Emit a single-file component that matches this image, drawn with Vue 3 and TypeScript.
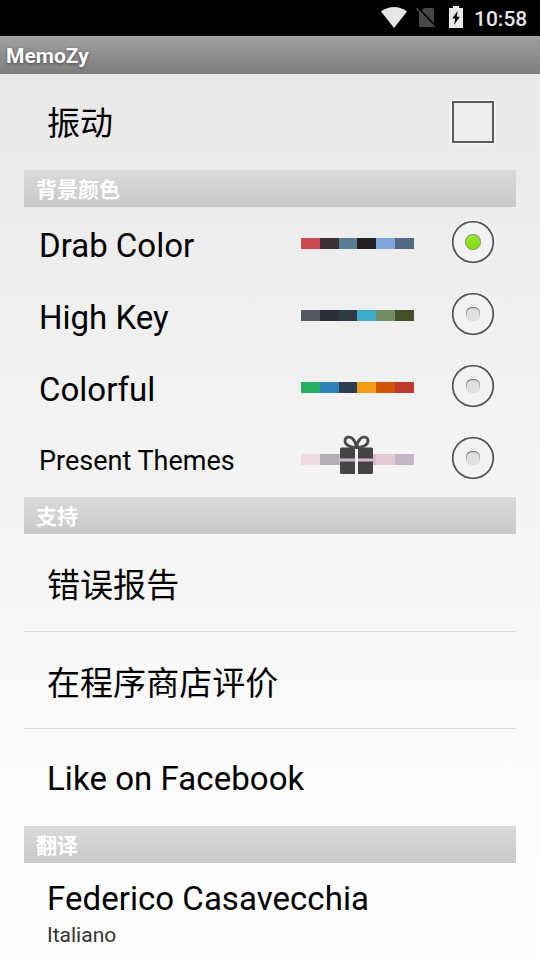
<script setup lang="ts">
import { ref } from 'vue'

interface Theme {
  name: string
  colors: string[]
  locked?: boolean
}

const themes: Theme[] = [
  { name: 'Drab Color', colors: ['#cc484f', '#3f3435', '#577c93', '#212223', '#7ea5da', '#536885'] },
  { name: 'High Key', colors: ['#555961', '#2a2e38', '#303c45', '#3cabc7', '#718d63', '#435126'] },
  { name: 'Colorful', colors: ['#29b060', '#2c81ba', '#2d3e50', '#f49c14', '#d25400', '#c1392c'] },
  { name: 'Present Themes', colors: ['#f0dce0', '#b5afb6', '#c8b8c6', '#d9b9cb', '#e3c8d5', '#c4b5c5'], locked: true },
]
const selected = ref('Drab Color')
const vibrate = ref(false)
const support: string[] = ['错误报告', '在程序商店评价', 'Like on Facebook']
</script>

<template>
  <div class="screen">
    <header class="status">
      <svg class="wifi" width="26" height="21" viewBox="0 0 26 21">
        <path d="M0 4.6C7.6-1.5 18.4-1.5 26 4.6L13 21Z" fill="#e6e6e6" />
      </svg>
      <svg class="sim" width="20" height="21" viewBox="0 0 20 21">
        <path d="M8 1h8.5a1.5 1.5 0 0 1 1.5 1.5V20H4.500a1.500 1.500 0 0 1-1.500-1.500V5.500Z" fill="#474747" />
        <path d="M1.200.6 19.500 20" stroke="#000" stroke-width="3" />
        <path d="M.6 1.600 18.500 20.300" stroke="#555" stroke-width="1.500" />
      </svg>
      <svg class="battery" width="14" height="22" viewBox="0 0 14 22">
        <path d="M4 0h6v2h4v20H0V2h4Z" fill="#e8e8e8" />
        <path d="M8.600 5 3.200 12.500h3L5.200 19l5.600-8.300H7.700Z" fill="#000" />
      </svg>
      <span class="clock">10:58</span>
    </header>
    <div class="titlebar">MemoZy</div>

    <main class="list">
      <label class="row vibrate" @click="vibrate = !vibrate">
        <span class="vibrate-name">振动</span>
        <svg class="control" width="48" height="48" viewBox="0 0 48 48">
          <rect x="1.500" y="1.500" width="45" height="45" rx="2" fill="#f6f6f6" />
          <rect x="4" y="4" width="40" height="40" fill="#ededed" stroke="#5b5b5b" stroke-width="2" />
          <path v-if="vibrate" d="M12 24l9 9 16-20" fill="none" stroke="#7fdc16" stroke-width="5" />
        </svg>
      </label>

      <h2 class="section">背景颜色</h2>
      <div class="themes">
        <label v-for="theme in themes" :key="theme.name" class="theme" @click="selected = theme.name">
          <span class="theme-name" :class="{ small: theme.locked }">{{ theme.name }}</span>
          <span class="palette">
            <i v-for="color in theme.colors" :key="color" :style="{ background: color }"></i>
            <svg v-if="theme.locked" class="gift" width="34" height="40" viewBox="0 0 34 40">
              <path d="M1 12.500H15V23.500H0V13.500ZM18 12.500H32L33 13.500V23.500H18ZM0 26.500H15V39H1L0 38ZM18 26.500H33V38L32 39H18Z" fill="#444" />
              <path d="M15 12.500h3V39h-3Z" fill="#f3f3f3" fill-opacity=".9" />
              <path d="M16.500 12.500C11.500 12.500 5 10.500 5 6 5 1.500 10 1 12.700 3.800 15 6 16 8.500 16.500 12.500ZM16.500 12.500C21.500 12.500 28 10.500 28 6 28 1.500 23 1 20.300 3.800 18 6 17 8.500 16.500 12.500Z" fill="none" stroke="#4a4a4a" stroke-width="2.800" />
            </svg>
          </span>
          <svg class="control" width="48" height="48" viewBox="0 0 48 48">
            <circle cx="24" cy="24" r="22.500" fill="#fafafa" />
            <circle cx="24" cy="24" r="20.300" fill="#f2f2f2" stroke="#555" stroke-width="1.800" />
            <g v-if="selected === theme.name">
              <circle cx="24" cy="24" r="8" fill="#858b82" />
              <circle cx="24" cy="24.200" r="7.200" fill="url(#led)" />
            </g>
            <g v-else>
              <rect x="17" y="17" width="14" height="14" rx="5.500" fill="url(#rim)" />
              <rect x="17.800" y="18.200" width="12.700" height="12.600" rx="5" fill="#dfdfdf" />
            </g>
          </svg>
        </label>
      </div>

      <h2 class="section">支持</h2>
      <ul class="actions">
        <li v-for="item in support" :key="item" class="row action">{{ item }}</li>
      </ul>

      <h2 class="section">翻译</h2>
      <div class="translator">
        <span class="person">Federico Casavecchia</span>
        <span class="language">Italiano</span>
      </div>
    </main>

    <svg class="defs" width="0" height="0">
      <defs>
        <linearGradient id="led" x1="0" y1="0" x2="0" y2="1">
          <stop offset="0" stop-color="#9be82d" />
          <stop offset="1" stop-color="#80d910" />
        </linearGradient>
        <linearGradient id="rim" x1="0" y1="0" x2="0" y2="1">
          <stop offset="0" stop-color="#777" />
          <stop offset=".6" stop-color="#b5b5b5" />
          <stop offset="1" stop-color="#e8e8e8" />
        </linearGradient>
      </defs>
    </svg>
  </div>
</template>

<style>
body {
  margin: 0;
  overflow: hidden;
}
</style>

<style scoped>
.screen {
  box-sizing: border-box;
  width: 540px;
  height: 960px;
  overflow: hidden;
  font-family: Roboto, "Noto Sans CJK SC", sans-serif;
  color: #000;
  background: linear-gradient(#e9e9e9 74px, #f3f3f3 450px, #fafafa 720px, #fefefe 900px);
}
.status {
  box-sizing: border-box;
  height: 36px;
  padding-right: 12px;
  display: flex;
  align-items: flex-start;
  justify-content: flex-end;
  background: #000;
}
.wifi {
  margin: 7px 9px 0 0;
}
.sim {
  margin: 7px 13px 0 0;
}
.battery {
  margin: 6px 11px 0 0;
}
.clock {
  width: 54px;
  color: #e6e6e6;
  font-size: 21px;
  font-weight: 500;
  line-height: 39px;
  white-space: nowrap;
}
.titlebar {
  box-sizing: border-box;
  height: 38px;
  padding-left: 6px;
  font-size: 21px;
  font-weight: 700;
  line-height: 40px;
  color: #fff;
  text-shadow: 0 1px 3px #444;
  background: linear-gradient(#a0a0a0, #7d7d7d);
}
.list {
  padding: 0 24px;
}
.row {
  box-sizing: border-box;
  display: flex;
  align-items: center;
  height: 97px;
  padding: 0 19px 0 23px;
  font-size: 33px;
}
.vibrate {
  height: 96px;
  justify-content: space-between;
}
.vibrate-name {
  padding-bottom: 2px;
}
.actions {
  margin: 0;
  padding: 0;
  list-style: none;
}
.action {
  padding-top: 1px;
  border-bottom: 1px solid #dcdcdc;
  letter-spacing: 0.06px;
}
.action:first-child {
  height: 98px;
}
.action:last-child {
  padding-top: 2px;
  border-bottom: 0;
}
.section {
  height: 37px;
  margin: 0;
  padding-left: 12px;
  font-size: 21px;
  font-weight: 700;
  line-height: 40px;
  color: #fff;
  background: linear-gradient(#dadada, #c9c9c9);
}
.themes {
  padding-bottom: 2px;
}
.theme {
  box-sizing: border-box;
  display: flex;
  align-items: center;
  height: 72px;
  padding: 0 19px 2px 15px;
}
.theme-name {
  flex: 1;
  padding-top: 6px;
  font-size: 33px;
}
.theme-name.small {
  padding-top: 6px;
  font-size: 27px;
}
.palette {
  position: relative;
  display: flex;
  width: 113px;
  height: 11px;
  margin: 3px 35px 0 0;
}
.palette i {
  flex: 1;
}
.gift {
  position: absolute;
  left: 39px;
  top: -19px;
}
.control {
  flex: none;
}
.translator {
  display: flex;
  flex-direction: column;
  height: 97px;
  padding: 16px 23px 0;
  box-sizing: border-box;
}
.person {
  font-size: 33px;
  line-height: 40px;
  letter-spacing: 0.04px;
}
.language {
  font-size: 21px;
  line-height: 32px;
  color: #333;
}
.defs {
  position: absolute;
}
</style>
